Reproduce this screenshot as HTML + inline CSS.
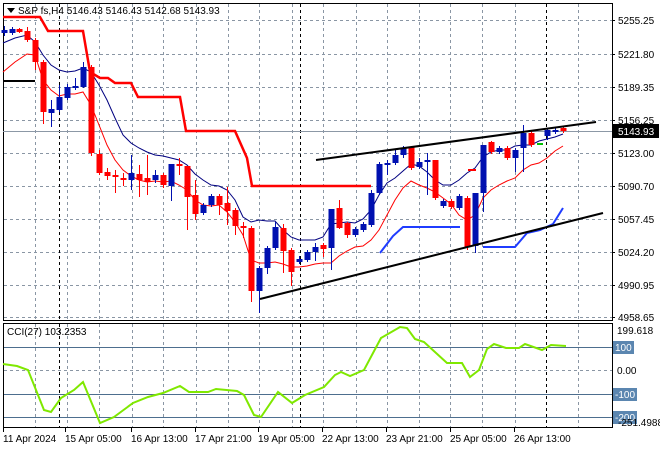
<!DOCTYPE html>
<html><head><meta charset="utf-8"><style>
body{margin:0;background:#fff;width:660px;height:450px;overflow:hidden;font-family:"Liberation Sans",sans-serif}
svg{display:block}
text{font-family:"Liberation Sans",sans-serif;font-size:10px;fill:#000}
</style></head><body>
<svg id="s" width="660" height="450" xmlns="http://www.w3.org/2000/svg">
<rect width="660" height="450" fill="#fff"/>
<g id="grid" stroke="#8a96a4" stroke-dasharray="3,3" stroke-width="1"></g>
<!-- frames -->
<rect x="3.5" y="3.5" width="609" height="317" fill="none" stroke="#000"/>
<rect x="3.5" y="323.5" width="609" height="104" fill="none" stroke="#000"/>
<line x1="3" y1="131.5" x2="612" y2="131.5" stroke="#8c98a6"/>
<!-- CCI level lines -->
<line x1="4" y1="347.5" x2="612" y2="347.5" stroke="#4d6e8e"/>
<line x1="4" y1="394.5" x2="612" y2="394.5" stroke="#4d6e8e"/>
<line x1="4" y1="417.5" x2="612" y2="417.5" stroke="#4d6e8e"/>
<line x1="4" y1="370.5" x2="612" y2="370.5" stroke="#8a96a4" stroke-dasharray="3,3"/>
<g id="ind"></g>
<g id="cdl"></g>
<!-- stepped red -->
<polyline fill="none" stroke="#ff0000" stroke-width="2.5" points="3,17 40,17 48,31 83,31 90,72 100,78 108,78 115,83 131,83 138,97 180,97 186,131 235,131 247,158 252,186 371,186"/>
<!-- stepped blue -->
<polyline fill="none" stroke="#1f3cff" stroke-width="2" points="380,253 393,236 403,227 460,227"/>
<polyline fill="none" stroke="#1f3cff" stroke-width="2" points="483,247 515,247 527,233 540,230 553,224 563,208"/>
<line x1="3" y1="81" x2="35" y2="81" stroke="#000" stroke-width="2"/>
<line x1="468" y1="170" x2="476" y2="170" stroke="#ff0000" stroke-width="2"/>
<line x1="537" y1="144" x2="543" y2="144" stroke="#00c000" stroke-width="2"/>
<!-- trendlines -->
<line x1="316" y1="160" x2="596" y2="122" stroke="#000" stroke-width="2"/>
<line x1="260" y1="299" x2="603" y2="213" stroke="#000" stroke-width="2"/>
<!-- CCI -->
<polyline fill="none" stroke="#7fe800" stroke-width="2" points="3,364 17,366 28,370 36,390 44,410 51,412 61,398 74,390 83,382 100,423 114,417 133,403 148,397 163,393 180,386 189,392 208,392 216,389 237,391 244,395 254,415 261,417 278,392 292,403 305,395 324,387 335,375 341,372 350,376 364,370 381,338 400,327 407,328 415,339 424,342 447,363 462,363 470,377 479,370 487,349 494,344 506,348 519,348 525,344 542,350 551,345 566,346"/>
<!-- header -->
<polygon points="7,8 15,8 11,13" fill="#000"/>
<text x="18" y="14">S&amp;P fs,H4  5146.43 5146.43 5142.68 5143.93</text>
<text x="7" y="335">CCI(27) 103.2353</text>
<!-- price axis -->
<g id="pax"></g>
<rect x="613" y="124" width="46" height="14" fill="#000"/>
<text x="618" y="135" style="fill:#fff">5143.93</text>
<text x="617" y="334">199.618</text>
<rect x="613" y="341" width="21" height="13" fill="#5b86b0"/><text x="615" y="351" style="fill:#fff">100</text>
<text x="617" y="374">0.00</text>
<rect x="613" y="388" width="24" height="13" fill="#5b86b0"/><text x="615" y="398" style="fill:#fff">-100</text>
<rect x="613" y="411" width="24" height="13" fill="#5b86b0"/><text x="615" y="421" style="fill:#fff">-200</text>
<text x="618" y="426">-251.4988</text>
<!-- time axis -->
<g id="tax"></g>
</svg>
<script>
var NS="http://www.w3.org/2000/svg";
function el(p,t,a,txt){var e=document.createElementNS(NS,t);for(var k in a)e.setAttribute(k,a[k]);if(txt)e.textContent=txt;document.getElementById(p).appendChild(e);return e;}
var hy=[20,54,87,120,153,186,219,252,285,317];
var hl=["5255.25","5221.80","5189.35","5156.25","5123.00","5090.70","5057.45","5024.20","4990.95","4958.65"];
hy.forEach(function(y,i){el("grid","line",{x1:4,y1:y+.5,x2:612,y2:y+.5});if(i!=4||true)el("pax","text",{x:618,y:y+4},hl[i]);el("pax","line",{x1:612,y1:y+.5,x2:615,y2:y+.5,stroke:"#000"});});
var vx=[35,67,99,132,163,196,228,259,292,323,356,387,419,450,482,515,578];
vx.forEach(function(x){el("grid","line",{x1:x+.5,y1:4,x2:x+.5,y2:320});el("grid","line",{x1:x+.5,y1:324,x2:x+.5,y2:427});});
[59,300,546].forEach(function(x){el("grid","line",{x1:x+.5,y1:4,x2:x+.5,y2:320,stroke:"#000"});el("grid","line",{x1:x+.5,y1:324,x2:x+.5,y2:427,stroke:"#000"});});
var tl=[[3,"11 Apr 2024"],[65,"15 Apr 05:00"],[131,"16 Apr 13:00"],[195,"17 Apr 21:00"],[258,"19 Apr 05:00"],[322,"22 Apr 13:00"],[386,"23 Apr 21:00"],[450,"25 Apr 05:00"],[514,"26 Apr 13:00"]];
tl.forEach(function(t){el("tax","text",{x:t[0],y:442},t[1]);el("tax","line",{x1:t[0]+.5,y1:428,x2:t[0]+.5,y2:432,stroke:"#000"});});
var navy="3,43 15,38 27,35 35,42 43,55 51,65 59,70 67,72 75,71 83,68 91,72 99,85 107,100 115,118 123,135 131,143 139,148 147,152 155,155 163,156 171,158 179,160 187,165 195,174 203,180 211,185 219,186 227,190 235,200 243,217 251,222 259,220 267,221 275,221 283,230 291,237 299,240 307,240 315,240 323,237 331,224 339,223 347,222 355,223 363,219 371,210 379,195 387,183 395,178 403,171 411,164 419,166 427,172 435,180 443,185 451,185 459,180 467,173 475,168 483,157 491,152 499,150 507,150 515,146 523,145 531,145 539,141 547,139 555,137 563,134";
var redm="3,72 15,62 27,54 35,55 43,80 51,90 59,96 67,94 75,94 83,92 91,105 99,125 107,145 115,160 123,170 131,176 139,180 147,182 155,181 163,182 171,181 179,185 187,190 195,200 203,205 211,206 219,205 227,212 235,222 243,235 251,260 259,263 267,263 275,262 283,264 291,267 299,267 307,266 315,264 323,263 331,263 339,256 347,251 355,247 363,246 371,240 379,230 387,215 395,200 403,188 411,181 419,185 427,188 435,192 443,198 451,204 459,215 467,220 475,215 483,198 491,190 499,185 507,181 515,178 523,170 531,165 539,163 547,158 555,151 563,146";
el("ind","polyline",{points:navy,fill:"none",stroke:"#000080","stroke-width":1});
el("ind","polyline",{points:redm,fill:"none",stroke:"#ff0000","stroke-width":1});
// x, top, bottom, high, low, color b/r
var C=[[4,30,33,26,36,"b"],[12,29,33,27,35,"b"],[19,29,32,28,33,"r"],[27,31,40,27,42,"r"],[35,40,62,38,70,"r"],[43,62,112,60,124,"r"],[51,109,113,100,127,"b"],[59,97,110,85,112,"b"],[67,87,98,84,100,"b"],[75,86,88,78,90,"b"],[83,67,87,62,88,"b"],[91,67,153,65,156,"r"],[99,154,173,150,175,"r"],[107,172,176,168,180,"r"],[115,175,177,170,193,"r"],[123,178,179,173,186,"r"],[131,173,180,155,190,"b"],[139,174,180,165,197,"r"],[147,178,182,155,195,"r"],[155,175,180,170,183,"b"],[163,175,185,173,188,"r"],[171,164,186,164,201,"b"],[179,164,166,158,175,"r"],[187,166,197,166,230,"r"],[195,195,214,180,220,"r"],[203,205,213,203,215,"b"],[211,196,205,194,207,"b"],[219,196,205,194,215,"r"],[227,203,211,187,225,"r"],[235,210,226,208,235,"r"],[243,226,228,222,238,"r"],[251,228,291,226,302,"r"],[259,268,291,266,313,"b"],[267,248,268,246,274,"b"],[275,227,248,222,250,"b"],[283,228,251,224,273,"r"],[291,250,272,248,286,"r"],[299,259,262,256,264,"b"],[307,252,260,250,262,"b"],[315,247,252,243,261,"b"],[323,245,249,243,257,"r"],[331,209,248,209,270,"b"],[339,208,228,200,229,"r"],[347,223,235,222,238,"r"],[355,229,235,227,237,"b"],[363,224,230,222,232,"b"],[371,193,225,190,227,"b"],[379,164,193,162,195,"b"],[387,163,165,160,175,"b"],[395,155,163,150,165,"b"],[403,148,155,146,158,"b"],[411,147,168,146,170,"r"],[419,162,167,158,169,"b"],[427,160,162,153,195,"b"],[435,160,198,160,200,"r"],[443,201,206,199,208,"b"],[451,201,207,199,209,"r"],[459,196,208,194,210,"b"],[467,198,247,196,250,"r"],[475,193,246,193,253,"b"],[483,145,193,145,212,"b"],[491,142,152,141,154,"r"],[499,148,152,146,154,"b"],[507,148,158,146,160,"r"],[515,150,158,148,172,"b"],[523,133,148,125,172,"b"],[531,133,145,131,147,"r"],[547,130,136,128,140,"b"],[555,130,132,128,134,"b"],[563,128,131,127,133,"r"]];
C.forEach(function(c){var col=c[5]=="b"?"#0010b0":"#ff0000";el("cdl","line",{x1:c[0]+.5,y1:c[3],x2:c[0]+.5,y2:c[4],stroke:col});el("cdl","rect",{x:c[0]-2.5,y:c[1],width:6,height:Math.max(2,c[2]-c[1]),fill:col});});
</script>
</body></html>
